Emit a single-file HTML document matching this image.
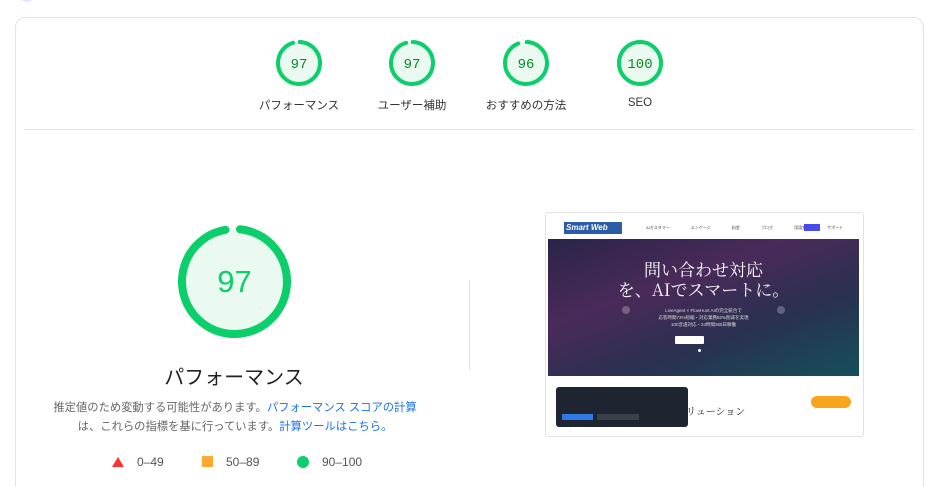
<!DOCTYPE html>
<html style="height:487px;overflow:hidden"><head><meta charset="utf-8"><style>
html,body{margin:0;width:940px;height:487px;overflow:hidden}
body{background:#fff;position:relative;font-family:"Liberation Sans","Noto Sans CJK JP",sans-serif;}
.abs{position:absolute}
.card{position:absolute;left:15px;top:17px;width:907px;height:490px;border:1px solid #e3e3e3;border-radius:10px;}
.lbl{position:absolute;width:140px;text-align:center;font-size:11.5px;color:#333;top:97px}
.num{font-family:"Liberation Mono",monospace;font-size:14px;fill:#0a8a27}
</style></head><body>
<div class="abs" style="left:20px;top:-8px;width:14px;height:10px;border-radius:50%;background:#dfe9fb"></div>
<div class="card"></div>
<svg class="abs" style="left:0;top:0" width="940" height="487">
<g fill="#eafaf0" stroke="#0cce6b" stroke-width="4" stroke-linecap="round">
<circle cx="299" cy="63" r="21" stroke-dasharray="125 7" transform="rotate(-88 299 63)"/>
<circle cx="412" cy="63" r="21" stroke-dasharray="125 7" transform="rotate(-88 412 63)"/>
<circle cx="526" cy="63" r="21" stroke-dasharray="123 9" transform="rotate(-88 526 63)"/>
<circle cx="640" cy="63" r="21"/>
<circle cx="234.5" cy="281.5" r="52.5" stroke-width="8" stroke-dasharray="315 15" transform="rotate(-84 234.5 281.5)"/>
</g>
<text x="299" y="68" text-anchor="middle" class="num">97</text>
<text x="412" y="68" text-anchor="middle" class="num">97</text>
<text x="526" y="68" text-anchor="middle" class="num">96</text>
<text x="640" y="68" text-anchor="middle" class="num">100</text>
<text x="234.5" y="292" text-anchor="middle" font-size="31" fill="#0cce6b" font-family="Liberation Sans,sans-serif">97</text>
<line x1="24" y1="129.5" x2="915" y2="129.5" stroke="#e6e6e6"/>
<line x1="469.5" y1="280" x2="469.5" y2="370" stroke="#e0e0e0"/>
<polygon points="118,457 124,467 112,467" fill="#f33"/>
<rect x="202" y="456" width="11" height="11" fill="#fa3"/>
<circle cx="303" cy="462" r="6" fill="#0cce6b"/>
</svg>
<div class="lbl" style="left:229px">パフォーマンス</div>
<div class="lbl" style="left:342px">ユーザー補助</div>
<div class="lbl" style="left:456px">おすすめの方法</div>
<div class="lbl" style="left:570px">SEO</div>
<div class="abs" style="left:84px;top:361px;width:300px;text-align:center;font-size:20px;color:#222">パフォーマンス</div>
<div class="abs" style="left:35px;top:399px;width:400px;text-align:center;font-size:11.3px;color:#666;line-height:19px">推定値のため変動する可能性があります。<span style="color:#1a73e8">パフォーマンス スコアの計算</span><br>は、これらの指標を基に行っています。<span style="color:#1a73e8">計算ツールはこちら。</span></div>
<div class="abs" style="left:137px;top:455px;font-size:12px;color:#555">0–49</div>
<div class="abs" style="left:226px;top:455px;font-size:12px;color:#555">50–89</div>
<div class="abs" style="left:322px;top:455px;font-size:12px;color:#555">90–100</div>
<!-- screenshot -->
<div class="abs" style="left:545px;top:212px;width:317px;height:223px;border:1px solid #e2e2e2;border-radius:3px;background:#fff;overflow:hidden">
 <div class="abs" style="left:18px;top:9px;width:56px;height:12px;background:#2a5ca8;color:#fff;font-size:8px;font-style:italic;font-weight:bold;line-height:12px;padding-left:2px">Smart Web</div>
 <div class="abs" style="left:100px;top:12px;font-size:4px;color:#444;white-space:nowrap;word-spacing:20px">AIカスタマー エンゲージ 料金 ブログ 用語集 サポート</div>
 <div class="abs" style="left:258px;top:11px;width:16px;height:7px;background:#4a4ae8"></div>
 <div class="abs" style="left:2px;top:26px;width:311px;height:137px;background:linear-gradient(160deg,#2a2448 0%,#4a2a5a 35%,#2a3050 65%,#14505a 100%)">
  <div class="abs" style="left:0;width:311px;top:20px;text-align:center;color:#fff;font-family:'Noto Serif CJK SC',serif;font-size:17px;line-height:20px">問い合わせ対応<br>を、AIでスマートに。</div>
  <div class="abs" style="left:0;width:311px;top:68px;text-align:center;color:#ddd;font-size:4.5px;line-height:7px">LiveAgent × FlowHunt AIの完全統合で<br>応答時間73%短縮・対応業務82%削減を実現<br>100言語対応・24時間365日稼働</div>
  <div class="abs" style="left:74px;top:67px;width:8px;height:8px;border-radius:50%;background:rgba(255,255,255,.25)"></div>
  <div class="abs" style="left:229px;top:67px;width:8px;height:8px;border-radius:50%;background:rgba(255,255,255,.25)"></div>
  <div class="abs" style="left:127px;top:97px;width:29px;height:8px;background:#fff;border-radius:1px"></div>
  <div class="abs" style="left:150px;top:110px;width:3px;height:3px;border-radius:50%;background:#fff"></div>
 </div>
 <div class="abs" style="left:130px;top:190px;font-size:10px;color:#222;font-family:'Noto Serif CJK SC',serif">ソリューション</div>
 <div class="abs" style="left:265px;top:183px;width:40px;height:12px;border-radius:6px;background:#f7a51c"></div>
 <div class="abs" style="left:10px;top:174px;width:132px;height:40px;background:#1e2430;border-radius:3px">
  <div class="abs" style="left:6px;top:27px;width:31px;height:6px;background:#2f7ae8"></div>
  <div class="abs" style="left:41px;top:27px;width:42px;height:6px;background:#3a404c"></div>
 </div>
</div>
</body></html>
